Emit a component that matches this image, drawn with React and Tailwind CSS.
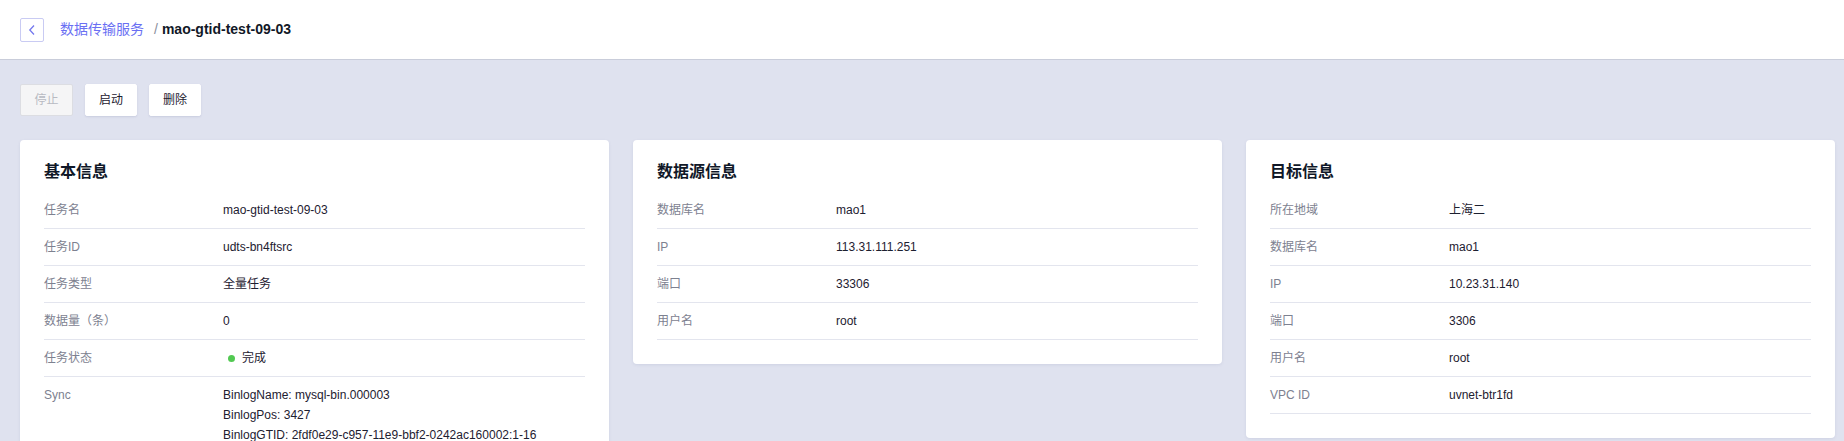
import React from "react";

const font = { fontFamily: '"Liberation Sans", Arial, "Noto Sans CJK SC", sans-serif' };

function Row({ label, children, last }) {
  return (
    <div className="flex border-b border-[#e3e5ee] py-2 text-[12px] leading-5">
      <div className="w-[179px] shrink-0 text-[#7d8190]">{label}</div>
      <div className="flex-1 text-[#1d2030]">{children}</div>
    </div>
  );
}

function Card({ title, rows, children }) {
  return (
    <div className="bg-white rounded-[4px] shadow-[0_1px_3px_rgba(90,100,150,0.12)] px-6 pt-6 pb-6 self-start">
      <div className="text-[16px] leading-4 font-bold text-[#101828] mb-3">{title}</div>
      <div>
        {rows.map(([l, v]) => (
          <Row key={l} label={l}>{v}</Row>
        ))}
        {children}
      </div>
    </div>
  );
}

export default function App() {
  return (
    <div style={font} className="min-h-[441px] bg-[#dfe2ef]">
      <div className="h-[60px] bg-white border-b border-[#c9cdda] flex items-center pl-5">
        <div className="w-6 h-6 border border-[#c9cbf3] rounded-[2px] flex items-center justify-center">
          <svg width="8" height="12" viewBox="0 0 8 12" fill="none">
            <path d="M6 1.5L1.8 6L6 10.5" stroke="#7478ee" strokeWidth="1.3" />
          </svg>
        </div>
        <span className="ml-4 text-[14px] text-[#6a6ff3]">数据传输服务</span>
        <span className="ml-[10px] text-[14px] text-[#8a8e9c]">/</span>
        <span className="ml-[4px] text-[14px] font-bold text-[#111827]">mao-gtid-test-09-03</span>
      </div>
      <div className="pl-5 pr-[9px] pt-6">
        <div className="flex gap-3 h-8">
          <button className="w-[53px] h-8 rounded-[2px] border border-[#dcdde2] bg-[#f5f5f6] text-[12px] text-[#b8bac2]">停止</button>
          <button className="w-[52px] h-8 rounded-[2px] border border-white bg-white text-[12px] text-[#1d2030] shadow-[0_1px_2px_rgba(80,90,140,0.15)]">启动</button>
          <button className="w-[52px] h-8 rounded-[2px] border border-white bg-white text-[12px] text-[#1d2030] shadow-[0_1px_2px_rgba(80,90,140,0.15)]">删除</button>
        </div>
        <div className="grid grid-cols-3 gap-6 mt-6 items-start">
          <Card
            title="基本信息"
            rows={[
              ["任务名", "mao-gtid-test-09-03"],
              ["任务ID", "udts-bn4ftsrc"],
              ["任务类型", "全量任务"],
              ["数据量（条）", "0"],
              ["任务状态", (
                <span className="flex items-center">
                  <span className="ml-[5px] mr-[7px] w-[7px] h-[7px] rounded-full bg-[#52c952]" />
                  完成
                </span>
              )],
            ]}
          >
            <Row label="Sync">
              <div>BinlogName: mysql-bin.000003</div>
              <div>BinlogPos: 3427</div>
              <div>BinlogGTID: 2fdf0e29-c957-11e9-bbf2-0242ac160002:1-16</div>
            </Row>
          </Card>
          <Card
            title="数据源信息"
            rows={[
              ["数据库名", "mao1"],
              ["IP", "113.31.111.251"],
              ["端口", "33306"],
              ["用户名", "root"],
            ]}
          />
          <Card
            title="目标信息"
            rows={[
              ["所在地域", "上海二"],
              ["数据库名", "mao1"],
              ["IP", "10.23.31.140"],
              ["端口", "3306"],
              ["用户名", "root"],
              ["VPC ID", "uvnet-btr1fd"],
            ]}
          />
        </div>
      </div>
    </div>
  );
}
